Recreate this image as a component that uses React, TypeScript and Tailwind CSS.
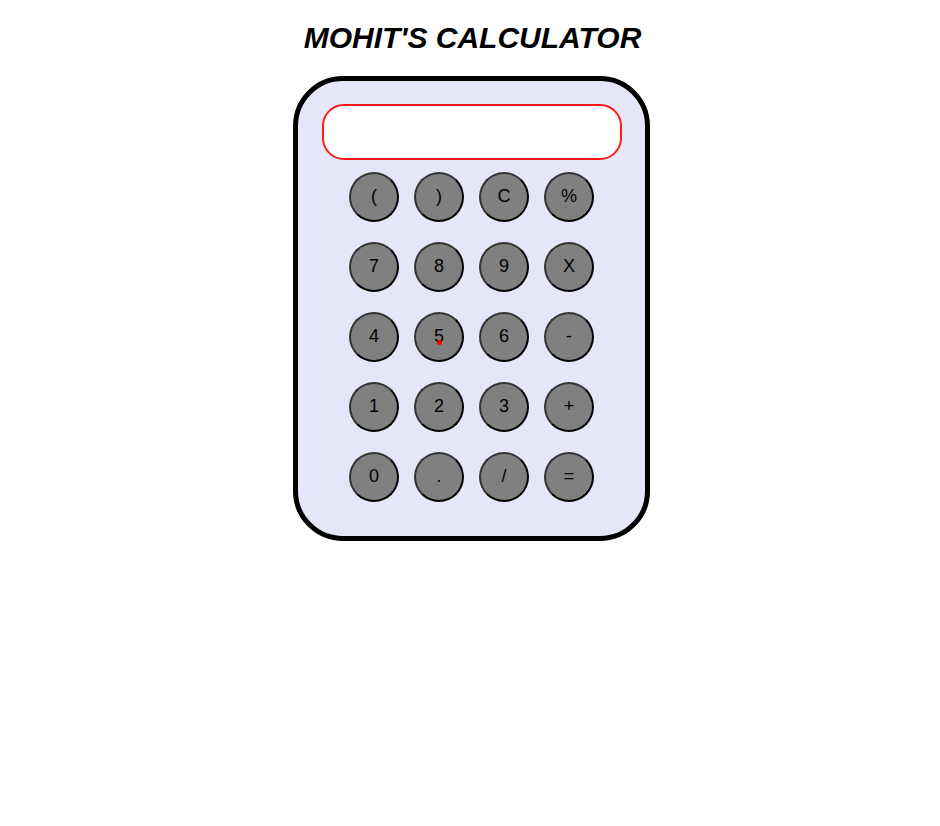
import { useState } from "react";

const keys = ["(", ")", "C", "%", "7", "8", "9", "X", "4", "5", "6", "-", "1", "2", "3", "+", "0", ".", "/", "="];

const App = () => {
    const [value, setValue] = useState("");

    const handleKey = (k: string) => {
        if (k === "C") return setValue("");
        if (k === "=") {
            try {
                const expr = value.replace(/X/g, "*").replace(/%/g, "/100");
                // eslint-disable-next-line no-new-func
                setValue(String(Function(`return (${expr})`)()));
            } catch (error) {
                setValue("Error");
            }
            return;
        }
        setValue(value + k);
    };

    return (
        <div className="min-h-screen bg-white flex flex-col items-center pl-[3px] font-['Liberation_Sans',Arial,sans-serif]">
            <h1 className="pt-[21px] mb-[20px] ml-[2px] text-[30px] font-bold italic text-black leading-[1.15]">MOHIT'S CALCULATOR</h1>
            <div className="w-[357px] bg-[#e6e6fa] border-[5px] border-black rounded-[50px] pt-[23px] pb-[34px] flex flex-col items-center">
                <input
                    readOnly
                    value={value}
                    className="w-[300px] h-[56px] bg-white border-2 border-[#ff1a1a] rounded-[22px] outline-none px-4 text-2xl text-right"
                />
                <div className="mt-3 grid grid-cols-[repeat(4,50px)] gap-x-[15px] gap-y-5">
                    {keys.map((k) => (
                        <button
                            key={k}
                            onClick={() => handleKey(k)}
                            className="relative w-[50px] h-[50px] rounded-full bg-[#808080] border-2 border-t-[#333] border-l-[#333] border-r-black border-b-black text-[18px] text-black flex items-center justify-center"
                        >
                            {k}
                            {k === "5" ? (
                                <span className="absolute left-[21px] top-[26px] w-[5px] h-[5px] rounded-full bg-[#ff0000]" />
                            ) : null}
                        </button>
                    ))}
                </div>
            </div>
        </div>
    );
};

export default App;
